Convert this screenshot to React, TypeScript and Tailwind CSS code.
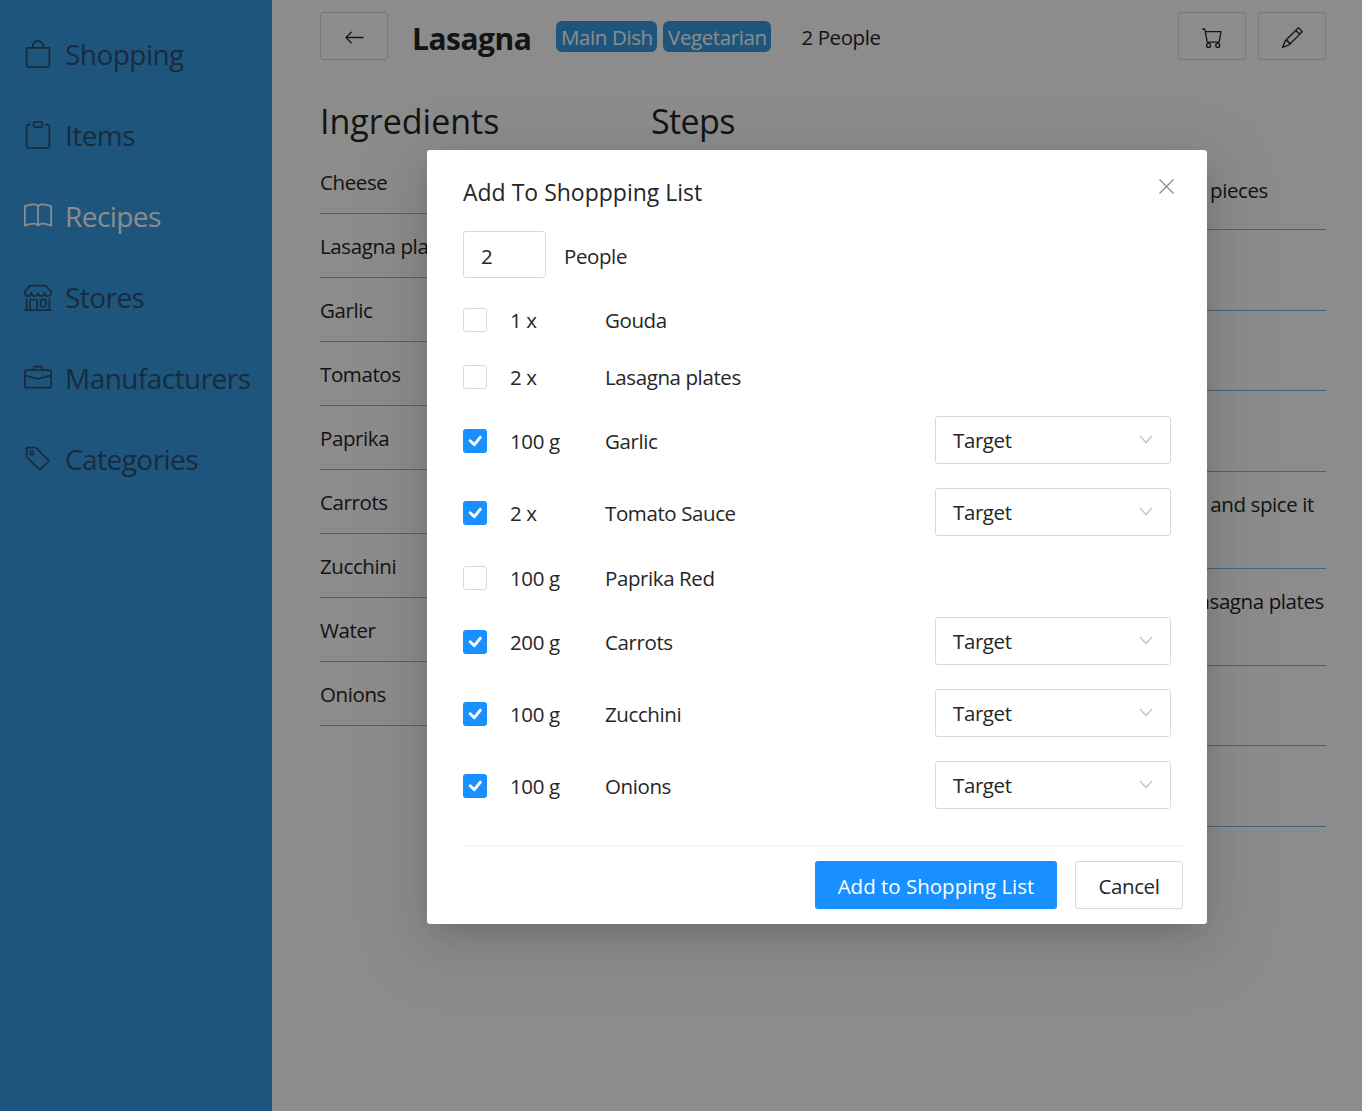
import { BsArrowLeft, BsBag, BsBook, BsBriefcase, BsCart, BsCheck, BsClipboard, BsPencil, BsShop, BsTag } from "react-icons/bs";

const navItems = [
  { label: "Shopping", icon: BsBag },
  { label: "Items", icon: BsClipboard },
  { label: "Recipes", icon: BsBook, active: true },
  { label: "Stores", icon: BsShop },
  { label: "Manufacturers", icon: BsBriefcase },
  { label: "Categories", icon: BsTag },
];

const ingredients = ["Cheese", "Lasagna plates", "Garlic", "Tomatos", "Paprika", "Carrots", "Zucchini", "Water", "Onions"];

const shoppingRows = [
  { qty: "1 x", name: "Gouda", checked: false },
  { qty: "2 x", name: "Lasagna plates", checked: false },
  { qty: "100 g", name: "Garlic", checked: true },
  { qty: "2 x", name: "Tomato Sauce", checked: true },
  { qty: "100 g", name: "Paprika Red", checked: false },
  { qty: "200 g", name: "Carrots", checked: true },
  { qty: "100 g", name: "Zucchini", checked: true },
  { qty: "100 g", name: "Onions", checked: true },
];

const Sidebar = () => (
  <div className="w-[272px] shrink-0 bg-[#359ce2] pt-[13px] pl-[24px] flex flex-col">
    {navItems.map((item) => (
      <div
        key={item.label}
        className={`h-[81px] flex items-center gap-[13px] text-[28px] tracking-[-0.55px] ${item.active ? "text-white" : "text-[#314f72]"}`}
      >
        <item.icon className="w-[28px] h-[28px] shrink-0" />
        <span>{item.label}</span>
      </div>
    ))}
  </div>
);

const RecipePage = () => (
  <div className="flex-1 bg-white pl-[48px] pr-[36px] pt-[12px] text-[#262626] text-[20.5px] tracking-[-0.4px]">
    {/* Header */}
    <div className="flex items-center h-[48px]">
      <div className="w-[68px] h-[48px] pt-[3px] border border-[#d9d9d9] rounded-[3px] flex items-center justify-center">
        <BsArrowLeft className="w-[21px] h-[21px]" />
      </div>
      <h1 className="ml-[24px] pt-[4px] text-[30px] tracking-[-0.5px] font-bold">Lasagna</h1>
      <div className="ml-[25px] flex gap-[6px]">
        <span className="h-[31px] w-[101px] pt-[3px] flex items-center justify-center rounded-[6px] bg-[#359ce2] text-white">Main Dish</span>
        <span className="h-[31px] w-[108px] pt-[3px] flex items-center justify-center rounded-[6px] bg-[#359ce2] text-white">Vegetarian</span>
      </div>
      <span className="ml-[30px] pt-[3px]">2 People</span>
      <div className="ml-auto flex gap-[12px]">
        <div className="w-[68px] h-[48px] pt-[3px] border border-[#d9d9d9] rounded-[3px] flex items-center justify-center">
          <BsCart className="w-[21px] h-[21px]" />
        </div>
        <div className="w-[68px] h-[48px] pt-[3px] border border-[#d9d9d9] rounded-[3px] flex items-center justify-center">
          <BsPencil className="w-[21px] h-[21px]" />
        </div>
      </div>
    </div>

    <div className="flex mt-[37px]">
      {/* Ingredients */}
      <div className="w-[330px] shrink-0">
        <h2 className="text-[34px] tracking-normal leading-[48px]">Ingredients</h2>
        <div className="mt-[5px]">
          {ingredients.map((name) => (
            <div key={name} className="h-[64px] pt-[17px] border-b border-[#7fb4dc] mr-[30px]">
              {name}
            </div>
          ))}
        </div>
      </div>

      {/* Steps */}
      <div className="flex-1">
        <h2 className="text-[34px] tracking-[-0.6px] leading-[48px] pl-[1px]">Steps</h2>
        <div className="mt-[1px]">
          <div className="h-[84px] pt-[29px] border-b border-[#7fb4dc] flex justify-end pr-[58px]">Cut everything into pieces</div>
          <div className="h-[81px] border-b border-[#7fb4dc]"></div>
          <div className="h-[80px] border-b border-[#7fb4dc]"></div>
          <div className="h-[81px] border-b border-[#7fb4dc]"></div>
          <div className="h-[97px] pt-[17px] border-b border-[#7fb4dc] flex justify-end pr-[12px]">Add the tomatos and spice it</div>
          <div className="h-[97px] pt-[17px] border-b border-[#7fb4dc] flex justify-end pr-[2px]">Layer the sauce and lasagna plates</div>
          <div className="h-[80px] border-b border-[#7fb4dc]"></div>
          <div className="h-[81px] border-b border-[#7fb4dc]"></div>
        </div>
      </div>
    </div>
  </div>
);

const Checkbox = ({ checked }: { checked: boolean }) =>
  checked ? (
    <div className="w-[24px] h-[24px] rounded-[3px] bg-[#1890ff] flex items-center justify-center shrink-0">
      <BsCheck className="w-[24px] h-[24px] text-white stroke-[0.6]" />
    </div>
  ) : (
    <div className="w-[24px] h-[24px] rounded-[3px] border border-[#d9d9d9] bg-white shrink-0"></div>
  );

const TargetSelect = () => (
  <div className="ml-auto mb-[2px] w-[236px] h-[48px] border border-[#d9d9d9] rounded-[3px] flex items-center pl-[17px] pr-[17px]">
    <span className="pt-[1px]">Target</span>
    <svg className="ml-auto mb-[2px]" width="14" height="9" viewBox="0 0 14 9" fill="none" stroke="#bfbfbf" strokeWidth="1.2">
      <path d="M1 1l6 6.5L13 1" />
    </svg>
  </div>
);

const ShoppingModal = () => (
  <div className="absolute inset-0 bg-black/45 pt-[150px] pl-[427px]">
    <div className="relative w-[780px] h-[774px] bg-white rounded-[3px] px-[36px] pt-[24px] text-[20.5px] tracking-[-0.4px] text-[#262626] shadow-[0_9px_24px_-12px_rgba(0,0,0,0.16),0_13px_42px_0_rgba(0,0,0,0.1),0_18px_72px_24px_rgba(0,0,0,0.05)]">
      <h3 className="text-[23px] tracking-normal leading-[36px]">Add To Shoppping List</h3>
      <svg className="absolute top-[29px] right-[33px]" width="15" height="15" viewBox="0 0 15 15" fill="none" stroke="#8c8c8c" strokeWidth="1.3">
        <path d="M0.5 0.5l14 14M14.5 0.5l-14 14" />
      </svg>

      <div className="mt-[21px] flex items-center">
        <div className="w-[83px] h-[47px] border border-[#d9d9d9] rounded-[3px] pl-[17px] pt-[3px] flex items-center">2</div>
        <span className="ml-[18px] pt-[3px]">People</span>
      </div>

      <div className="mt-[25px] flex flex-col gap-[24px]">
        {shoppingRows.map((row) => (
          <div key={row.name} className={`flex items-center ${row.checked ? "h-[48px]" : "h-[33px]"}`}>
            <Checkbox checked={row.checked} />
            <span className="ml-[23px] w-[95px] pt-[1px]">{row.qty}</span>
            <span className="pt-[1px]">{row.name}</span>
            {row.checked && <TargetSelect />}
          </div>
        ))}
      </div>

      <div className="absolute left-[36px] right-[24px] top-[695px] border-t border-[#f0f0f0] pt-[15px] flex justify-end gap-[18px]">
        <button className="w-[242px] h-[48px] pt-[2px] rounded-[3px] bg-[#1890ff] text-white tracking-normal shadow-[0_2px_0_rgba(0,0,0,0.045)]">Add to Shopping List</button>
        <button className="w-[108px] h-[48px] pt-[2px] rounded-[3px] border border-[#d9d9d9] bg-white shadow-[0_2px_0_rgba(0,0,0,0.015)]">Cancel</button>
      </div>
    </div>
  </div>
);

export default function App() {
  return (
    <div className="relative h-[1111px] overflow-hidden flex font-['Open_Sans',sans-serif]">
      <Sidebar />
      <RecipePage />
      <ShoppingModal />
    </div>
  );
}
